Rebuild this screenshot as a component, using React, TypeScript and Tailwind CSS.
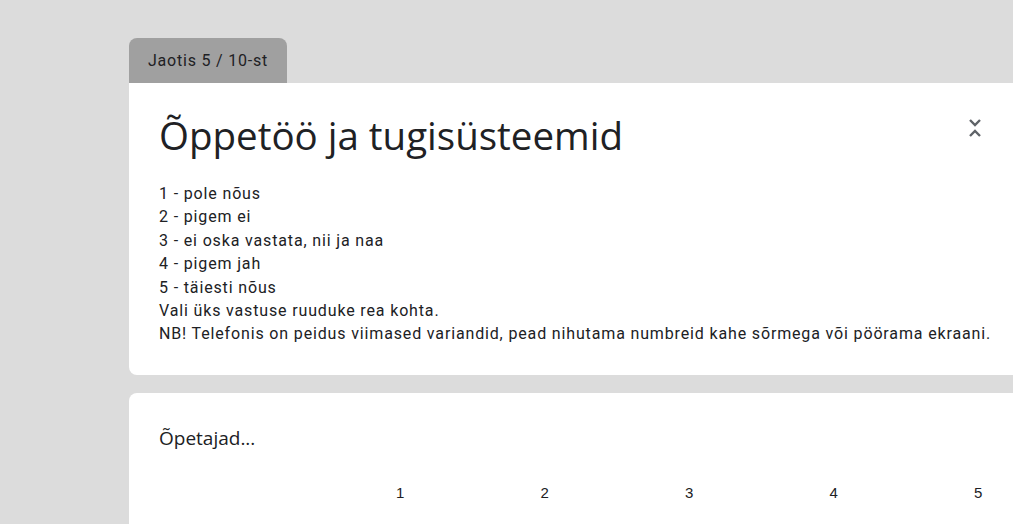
export default function App() {
  const lines = [
    '1 - pole nõus',
    '2 - pigem ei',
    '3 - ei oska vastata, nii ja naa',
    '4 - pigem jah',
    '5 - täiesti nõus',
    'Vali üks vastuse ruuduke rea kohta.',
    'NB! Telefonis on peidus viimased variandid, pead nihutama numbreid kahe sõrmega või pöörama ekraani.',
  ]
  return (
    <div className="h-[524px] w-[1013px] overflow-hidden bg-[#dcdcdc] pl-[129px] pt-[38px]">
      <div className="w-[1000px]">
        <div className="flex h-[45px] w-[158px] items-center justify-center rounded-t-lg bg-[#a0a0a0] font-['Roboto',sans-serif] text-[16px] tracking-[0.8px] text-[#202124]">
          Jaotis 5 / 10-st
        </div>
        <div className="relative rounded-b-lg rounded-tr-lg bg-white pl-[30px] pr-6 pt-[26px] pb-[29px]">
          <h1 className="font-['Open_Sans',sans-serif] text-[38.5px] leading-[52px] text-[#202124]">
            Õppetöö ja tugisüsteemid
          </h1>
          <button className="absolute left-[836px] top-[33px] text-[#5f6368]">
            <svg width="20" height="24" viewBox="0 0 20 24" fill="none" stroke="currentColor" strokeWidth="2.4">
              <path d="M5 4l5 5 5-5" />
              <path d="M5 20l5-5 5 5" />
            </svg>
          </button>
          <div className="mt-[21px] font-['Roboto',sans-serif] text-[16px] leading-[23.4px] tracking-[0.85px] text-[#202124]">
            {lines.map(l => (
              <div key={l}>{l}</div>
            ))}
          </div>
        </div>
        <div className="mt-[18px] h-[200px] rounded-lg bg-white pl-[30px] pt-[33px]">
          <div className="font-['Open_Sans',sans-serif] text-[19px] leading-[24px] text-[#202124]">Õpetajad...</div>
          <div className="mt-[33px] flex font-['Liberation_Sans',sans-serif] text-[15px] leading-[20px] text-[#202124]">
            <div className="w-[169px] shrink-0" />
            {[1, 2, 3, 4, 5].map(n => (
              <div key={n} className="w-[144.5px] shrink-0 text-center">{n}</div>
            ))}
          </div>
        </div>
      </div>
    </div>
  )
}
